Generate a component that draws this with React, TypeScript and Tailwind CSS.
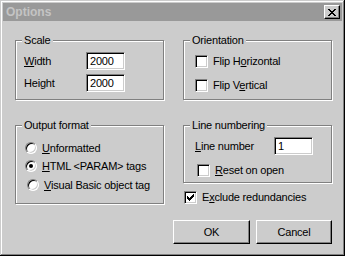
import type { ReactNode } from "react";

const raised =
  "border border-t-white border-l-white border-r-black border-b-black shadow-[inset_-1px_-1px_0_#808080]";
const sunken =
  "border border-t-[#808080] border-l-[#808080] border-r-white border-b-white shadow-[inset_1px_1px_0_#000,inset_-1px_-1px_0_#ccc]";

const GroupBox = ({
  title,
  className,
  children,
}: {
  title: ReactNode;
  className: string;
  children: ReactNode;
}) => (
  <div
    className={`relative border border-[#808080] shadow-[inset_1px_1px_0_#fff,1px_1px_0_#fff] ${className}`}
  >
    <span className="absolute -top-[7px] left-[6px] bg-[#cccccc] px-[2px] leading-[13px]">
      {title}
    </span>
    {children}
  </div>
);

const TextBox = ({ value, className }: { value: string; className: string }) => (
  <div className={`h-[18px] bg-white pl-[3px] leading-[16px] ${sunken} ${className}`}>
    {value}
  </div>
);

const CheckBox = ({ checked, label }: { checked?: boolean; label: ReactNode }) => (
  <div className="flex items-center h-[13px]">
    <div className={`relative w-[13px] h-[13px] bg-white ${sunken}`}>
      {checked && (
        <svg className="absolute left-[2px] top-[2px]" width="7" height="7" viewBox="0 0 7 7">
          <path d="M0 2h1v1h1v1h1V3h1V2h1V1h1V0h1v3h-1v1h-1v1h-1v1h-1v1H2V6H1V5H0z" fill="#000" />
        </svg>
      )}
    </div>
    <span className="ml-[5px] leading-[13px]">{label}</span>
  </div>
);

const Radio = ({ checked, label, className }: { checked?: boolean; label: ReactNode; className?: string }) => (
  <div className={`flex items-center h-[12px] ${className ?? ""}`}>
    <div className="relative w-[12px] h-[12px] rounded-full bg-white border border-t-[#808080] border-l-[#808080] border-r-white border-b-white shadow-[inset_1px_1px_0_#000,inset_-1px_-1px_0_#ccc]">
      {checked && (
        <div className="absolute left-[3px] top-[3px] w-[4px] h-[4px] rounded-full bg-black" />
      )}
    </div>
    <span className="ml-[5px] leading-[13px]">{label}</span>
  </div>
);

export default function App() {
  return (
    <div
      className="w-[345px] h-[256px] bg-[#cccccc] p-[3px] text-[11px] tracking-[-0.2px] text-black shadow-[inset_-1px_-1px_0_#000,inset_1px_1px_0_#ccc,inset_-2px_-2px_0_#808080,inset_2px_2px_0_#fff]"
      style={{ fontFamily: '"Liberation Sans", Arial, sans-serif' }}
    >
      {/* title bar */}
      <div className="h-[18px] bg-[#999999] flex items-center justify-between pl-[3px] pr-[2px]">
        <span className="font-bold text-[12px] tracking-normal text-[#c4c4c4] leading-[14px]">Options</span>
        <div className={`w-[16px] h-[14px] bg-[#cccccc] flex items-center justify-center ${raised}`}>
          <svg width="8" height="7" viewBox="0 0 8 7">
            <path d="M0 0h2v1h1v1h2V1h1V0h2v1H7v1H6v1H5v1h1v1h1v1h1v1H6V6H5V5H3v1H2v1H0V6h1V5h1V4h1V3H2V2H1V1H0z" fill="#000" />
          </svg>
        </div>
      </div>

      <div className="flex gap-[19px] pl-[12px] pt-[19px]">
        {/* left column */}
        <div className="flex flex-col w-[149px]">
          <GroupBox title="Scale" className="h-[60px] pt-[11px] pl-[8px]">
            <div className="flex items-center h-[18px]">
              <span className="w-[62px]"><u>W</u>idth</span>
              <TextBox value="2000" className="w-[39px]" />
            </div>
            <div className="flex items-center h-[18px] mt-[4px]">
              <span className="w-[62px]">Height</span>
              <TextBox value="2000" className="w-[39px]" />
            </div>
          </GroupBox>

          <GroupBox title="Output format" className="mt-[25px] h-[79px] pt-[16px] pl-[9px]">
            <Radio label={<><u>U</u>nformatted</>} />
            <Radio checked className="mt-[6px]" label={<><u>H</u>TML &lt;PARAM&gt; tags</>} />
            <Radio className="mt-[7px] ml-[2px]" label={<><u>V</u>isual Basic object tag</>} />
          </GroupBox>
        </div>

        {/* right column */}
        <div className="flex flex-col w-[149px]">
          <GroupBox title="Orientation" className="h-[60px] pt-[14px] pl-[11px]">
            <CheckBox label={<>Flip H<u>o</u>rizontal</>} />
            <div className="mt-[11px]">
              <CheckBox label={<>Flip V<u>e</u>rtical</>} />
            </div>
          </GroupBox>

          <GroupBox title="Line numbering" className="mt-[25px] h-[58px] pt-[11px] pl-[11px]">
            <div className="flex items-center h-[18px]">
              <span className="w-[79px]"><u>L</u>ine number</span>
              <TextBox value="1" className="w-[39px]" />
            </div>
            <div className="mt-[9px] pl-[2px]">
              <CheckBox label={<><u>R</u>eset on open</>} />
            </div>
          </GroupBox>

          <div className="mt-[8px] pl-[1px]">
            <CheckBox checked label={<>E<u>x</u>clude redundancies</>} />
          </div>

          <div className="flex gap-[6px] mt-[16px] -ml-[10px]">
            <button className={`w-[77px] h-[24px] bg-[#cccccc] ${raised}`}>OK</button>
            <button className={`w-[76px] h-[24px] bg-[#cccccc] ${raised}`}>Cancel</button>
          </div>
        </div>
      </div>
    </div>
  );
}
